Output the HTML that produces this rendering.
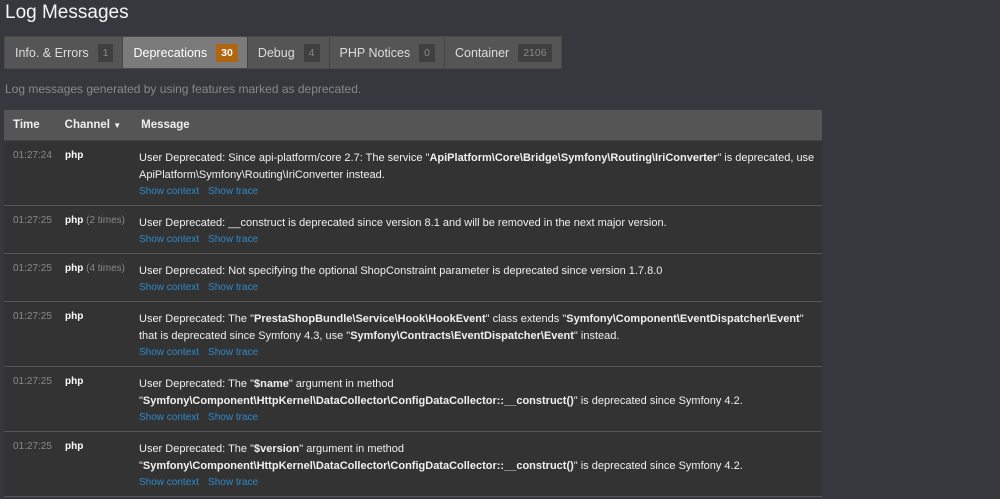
<!DOCTYPE html>
<html><head><style>
body{margin:0;background:#36383d;font-family:"Liberation Sans",sans-serif;color:#f0f0f0;width:1000px;height:484px;overflow:hidden;position:relative}
h1{position:absolute;left:5px;top:2px;margin:0;font-size:19px;font-weight:normal;color:#f5f5f5}
.tabs{position:absolute;left:4px;top:36px;height:31px;display:flex;background:#555;border:1px solid #4a4a4a}
.tab{display:flex;align-items:center;padding:0 9px 0 10px;font-size:12.5px;color:#ddd;border-right:1px solid #444;height:31px}
.tab.act{background:#7b7b7b;color:#fff}
.b{display:inline-block;background:#3f3f3f;color:#888;font-size:10.5px;padding:3px 5px;margin-left:9px}
.act .b{background:#b0660e;color:#fff;font-weight:bold}
.desc{position:absolute;left:5px;top:82px;font-size:12px;color:#888}
.tbl{position:absolute;left:4px;top:110px;width:818px;background:#333}
.hd{height:30px;background:#555;display:flex;align-items:center;font-size:11.5px;font-weight:bold;border-bottom:1px solid #444}
.row{position:relative;border-bottom:1px solid #555;font-size:11px;box-sizing:border-box}
.t{position:absolute;left:9px;top:9px;color:#888;font-size:10px}
.c{position:absolute;left:61px;top:9px;font-weight:bold;font-size:10px;color:#fff}
.c span{font-weight:normal;color:#888}
.m{margin-left:135px;padding:9px 0 8px 0;line-height:17px;white-space:nowrap}
.l{font-size:10px;color:#2e88c9;line-height:16px}
.l span{margin-right:9px}
</style></head><body>
<h1>Log Messages</h1>
<div class="tabs">
<div class="tab">Info. &amp; Errors<span class="b">1</span></div>
<div class="tab act">Deprecations<span class="b">30</span></div>
<div class="tab">Debug<span class="b">4</span></div>
<div class="tab">PHP Notices<span class="b">0</span></div>
<div class="tab" style="border-right:0">Container<span class="b">2106</span></div>
</div>
<div class="desc">Log messages generated by using features marked as deprecated.</div>
<div class="tbl">
<div class="hd"><span style="margin-left:9px">Time</span><span style="margin-left:25px">Channel <span style="font-size:8px">▼</span></span><span style="margin-left:20px">Message</span></div>
<div class="row" style="height:65px"><div class="t">01:27:24</div><div class="c">php</div><div class="m">User Deprecated: Since api-platform/core 2.7: The service "<b>ApiPlatform\Core\Bridge\Symfony\Routing\IriConverter</b>" is deprecated, use<br>ApiPlatform\Symfony\Routing\IriConverter instead.<div class="l"><span>Show context</span><span>Show trace</span></div></div></div>
<div class="row" style="height:48px"><div class="t">01:27:25</div><div class="c">php <span>(2 times)</span></div><div class="m">User Deprecated: __construct is deprecated since version 8.1 and will be removed in the next major version.<div class="l"><span>Show context</span><span>Show trace</span></div></div></div>
<div class="row" style="height:48px"><div class="t">01:27:25</div><div class="c">php <span>(4 times)</span></div><div class="m">User Deprecated: Not specifying the optional ShopConstraint parameter is deprecated since version 1.7.8.0<div class="l"><span>Show context</span><span>Show trace</span></div></div></div>
<div class="row" style="height:65px"><div class="t">01:27:25</div><div class="c">php</div><div class="m">User Deprecated: The "<b>PrestaShopBundle\Service\Hook\HookEvent</b>" class extends "<b>Symfony\Component\EventDispatcher\Event</b>"<br>that is deprecated since Symfony 4.3, use "<b>Symfony\Contracts\EventDispatcher\Event</b>" instead.<div class="l"><span>Show context</span><span>Show trace</span></div></div></div>
<div class="row" style="height:65px"><div class="t">01:27:25</div><div class="c">php</div><div class="m">User Deprecated: The "<b>$name</b>" argument in method<br>"<b>Symfony\Component\HttpKernel\DataCollector\ConfigDataCollector::__construct()</b>" is deprecated since Symfony 4.2.<div class="l"><span>Show context</span><span>Show trace</span></div></div></div>
<div class="row" style="height:65px"><div class="t">01:27:25</div><div class="c">php</div><div class="m">User Deprecated: The "<b>$version</b>" argument in method<br>"<b>Symfony\Component\HttpKernel\DataCollector\ConfigDataCollector::__construct()</b>" is deprecated since Symfony 4.2.<div class="l"><span>Show context</span><span>Show trace</span></div></div></div>
</div>
</body></html>
